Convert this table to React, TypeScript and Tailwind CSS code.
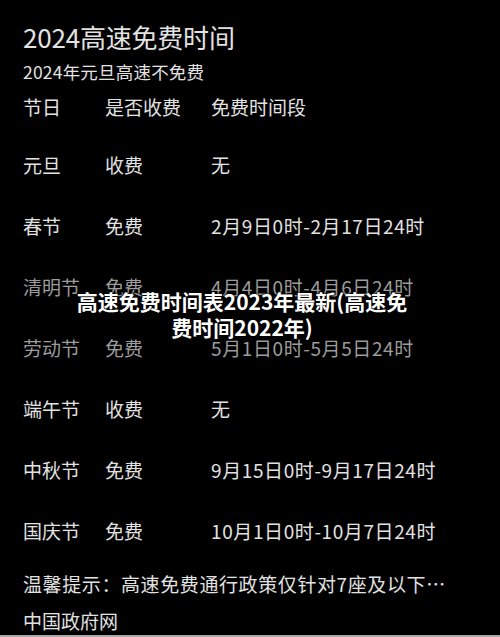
import React from 'react';

interface Row {
    name: string;
    toll: string;
    period: string;
    dim?: boolean;
}

const rows: Row[] = [
    { name: '元旦', toll: '收费', period: '无' },
    { name: '春节', toll: '免费', period: '2月9日0时-2月17日24时' },
    { name: '清明节', toll: '免费', period: '4月4日0时-4月6日24时', dim: true },
    { name: '劳动节', toll: '免费', period: '5月1日0时-5月5日24时', dim: true },
    { name: '端午节', toll: '收费', period: '无' },
    { name: '中秋节', toll: '免费', period: '9月15日0时-9月17日24时' },
    { name: '国庆节', toll: '免费', period: '10月1日0时-10月7日24时' },
];

export default function App() {
    return (
        <div className="relative w-[500px] h-[637px] bg-black overflow-hidden font-['Noto_Sans_CJK_SC',sans-serif] text-[#e2e2e2] border-b-2 border-[#a8a8a8]">
            <div className="pt-[22px] px-[23px]">
                <h1 className="text-[26px] leading-[30px] tracking-[-0.2px]">2024高速免费时间</h1>
                <p className="mt-[10px] text-[17.5px] leading-[20px] tracking-[0.2px]">2024年元旦高速不免费</p>

                <div className="mt-[14px] flex h-[22px] items-center text-[19px] leading-[22px]">
                    <span className="w-[82px]">节日</span>
                    <span className="w-[106px]">是否收费</span>
                    <span>免费时间段</span>
                </div>

                <div className="mt-[16px]">
                    {rows.map((row) => (
                        <div
                            key={row.name}
                            className={`flex h-[61px] items-center text-[19px] leading-[22px] ${row.dim ? 'text-[#9c9c9c]' : ''}`}
                        >
                            <span className="w-[82px]">{row.name}</span>
                            <span className="w-[106px]">{row.toll}</span>
                            <span className="tracking-[0.6px] whitespace-nowrap">{row.period}</span>
                        </div>
                    ))}
                </div>

                <p className="mt-[12px] text-[19px] leading-[22px] tracking-[0.6px] whitespace-nowrap">温馨提示：高速免费通行政策仅针对7座及以下…</p>
                <p className="mt-[15px] text-[19px] leading-[22px]">中国政府网</p>
            </div>

            {/* 标题水印 */}
            <div className="absolute left-0 top-[288px] w-[484px] text-center text-white font-bold text-[21px] leading-[26px] [text-shadow:0_0_3px_#000,0_0_2px_#000,0_0_1px_#000]">
                <div className="whitespace-nowrap">高速免费时间表2023年最新(高速免</div>
                <div className="whitespace-nowrap">费时间2022年)</div>
            </div>
        </div>
    );
}
